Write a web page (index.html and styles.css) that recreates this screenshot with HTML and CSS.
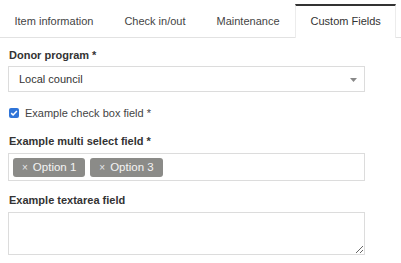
FILE: index.html
```html
<!DOCTYPE html>
<html>
<head>
<meta charset="utf-8">
<link rel="stylesheet" href="styles.css">
</head>
<body>
<nav class="tabs">
  <div class="tab">Item information</div>
  <div class="tab">Check in/out</div>
  <div class="tab">Maintenance</div>
  <div class="tab active">Custom Fields</div>
</nav>
<form class="form">
  <label class="label">Donor program *</label>
  <div class="select">
    <span>Local council</span>
    <svg class="caret" width="7" height="4" viewBox="0 0 7 4"><path d="M0 0h7L3.5 4z" fill="#888"/></svg>
  </div>
  <div class="check-row">
    <span class="checkbox"><svg width="10" height="10" viewBox="0 0 10 10"><path d="M2.2 5.1l1.9 1.9 3.8-4" fill="none" stroke="#fff" stroke-width="1.5"/></svg></span>
    <span>Example check box field *</span>
  </div>
  <label class="label">Example multi select field *</label>
  <div class="multi">
    <span class="tag"><span class="x">×</span>Option 1</span>
    <span class="tag"><span class="x">×</span>Option 3</span>
  </div>
  <label class="label">Example textarea field</label>
  <textarea class="textarea"></textarea>
</form>
</body>
</html>
```
FILE: styles.css
```css
* { box-sizing: border-box; }
html, body { margin: 0; background: #fff; }
body {
  font-family: "Liberation Sans", Arial, sans-serif;
  font-size: 11px;
  color: #333;
  width: 401px;
  height: 263px;
  overflow: hidden;
}
.tabs {
  display: flex;
  margin-top: 4px;
  border-bottom: 1px solid #e2e2e2;
}
.tab {
  padding: 0 14.5px;
  height: 33px;
  line-height: 31px;
  border-top: 2px solid transparent;
  border-left: 1px solid transparent;
  border-right: 1px solid transparent;
  color: #444;
  white-space: nowrap;
}
.tab:first-child { padding-left: 13.5px; }
.tab.active {
  border-top-color: #333;
  border-left-color: #ececec;
  border-right-color: #ececec;
  background: #fff;
  margin-bottom: -1px;
  height: 34px;
  color: #333;
}
.form {
  display: flex;
  flex-direction: column;
  align-items: flex-start;
  padding: 10px 0 0 8px;
}
.label {
  display: block;
  font-weight: bold;
  line-height: 14px;
  margin-bottom: 4px;
  padding-left: 1px;
  color: #333;
}
.select {
  width: 357px;
  height: 26px;
  border: 1px solid #dcdcdc;
  display: flex;
  align-items: center;
  justify-content: space-between;
  padding: 0 7px 0 10px;
  color: #333;
}
.caret { margin-top: 1px; }
.check-row {
  display: flex;
  align-items: center;
  gap: 6px;
  margin: 14px 0 14px 1px;
  line-height: 14px;
  color: #444;
}
.checkbox {
  width: 10px;
  height: 10px;
  border-radius: 2px;
  background: #2f74d8;
  display: flex;
}
.multi {
  width: 357px;
  height: 28px;
  border: 1px solid #dcdcdc;
  display: flex;
  align-items: center;
  gap: 5px;
  padding: 0 4px;
  margin-top: 1px;
  margin-bottom: 12px;
}
.tag {
  background: #8b8b88;
  color: #f4f4f4;
  border-radius: 3px;
  height: 19px;
  line-height: 19px;
  padding: 0 9px 0 9px;
  font-size: 11.5px;
}
.tag .x {
  font-size: 10px;
  margin-right: 5px;
  color: #e8e8e8;
}
.textarea {
  width: 357px;
  height: 43px;
  border: 1px solid #dcdcdc;
  margin: 1px 0 0 0;
  resize: both;
  font-family: inherit;
}
```
